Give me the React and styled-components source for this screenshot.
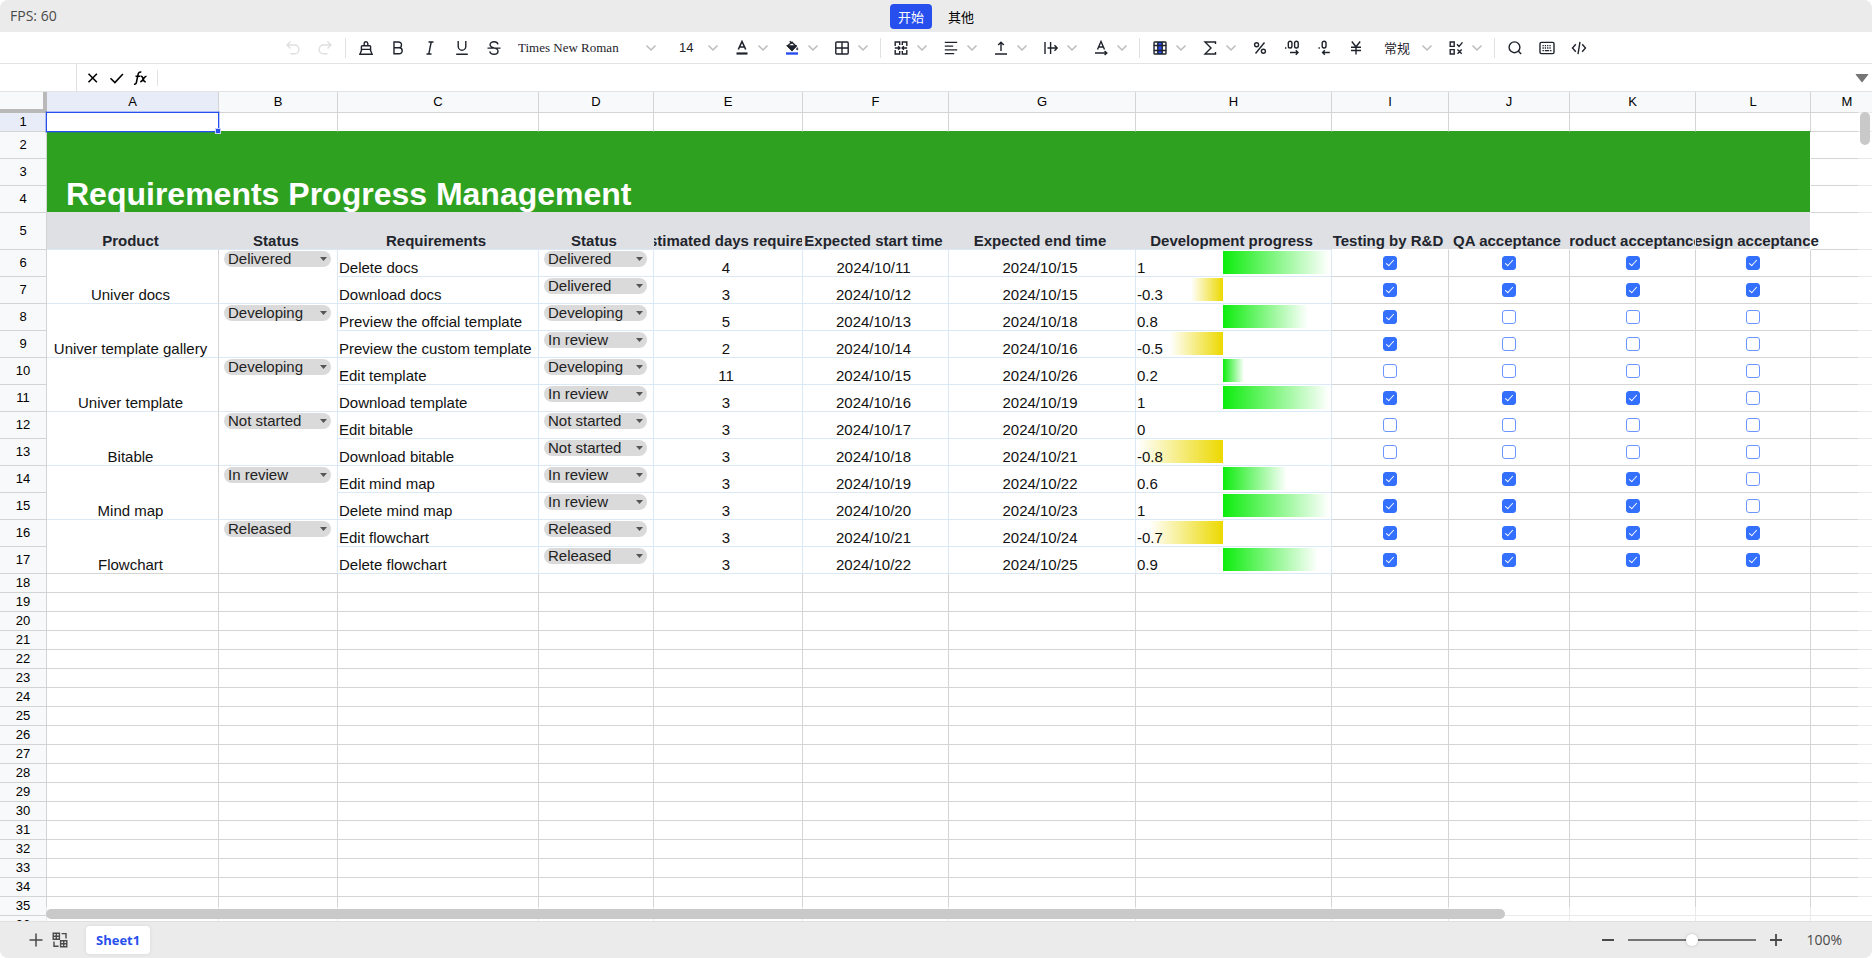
import React from "react";
import styled, { createGlobalStyle, css } from "styled-components";

const GRID = "#d4d4d4";
const SOFT = "#dbe9f6";
const GREEN = "#2fa121";
const BAND = "#dfe0e4";
const INK = "#1e222b";
const BLUE = "#274fee";

const UI_FONT = '"Open Sans", "Noto Sans CJK SC", sans-serif';
const CELL_FONT = '"Liberation Sans", Arial, "Noto Sans CJK SC", sans-serif';

const GlobalStyle = createGlobalStyle`
  *, *::before, *::after { box-sizing: border-box; }
  body { margin: 0; background: #fff; color: ${INK}; font-family: ${UI_FONT}; font-size: 13px; }
  button, select, input { font: inherit; color: inherit; margin: 0; }
`;

const Page = styled.div`
  display: flex;
  flex-direction: column;
  height: 100vh;
  overflow: hidden;
  border-radius: 8px;
`;

/* ---------- top bar ---------- */

const TopBar = styled.header`
  display: grid;
  grid-template-columns: 1fr auto 1fr;
  align-items: center;
  height: 32px;
  flex: none;
  padding: 0 10px;
  background: #ebebeb;
`;

const Fps = styled.span`
  color: #4a4a4a;
  font-size: 14px;
  line-height: 20px;
`;

const RibbonTabs = styled.nav`
  display: flex;
  gap: 8px;
  padding-top: 1px;
`;

const RibbonTab = styled.button`
  height: 25px;
  padding: 0 8px;
  border: 0;
  border-radius: 4px;
  font-family: "Noto Sans CJK SC", sans-serif;
  line-height: 24px;
  background: ${(p) => (p.$active ? BLUE : "transparent")};
  color: ${(p) => (p.$active ? "#fff" : "#000")};
`;

/* ---------- toolbar ---------- */

const Toolbar = styled.div`
  display: flex;
  align-items: center;
  justify-content: center;
  gap: 8px;
  height: 32px;
  flex: none;
  border-bottom: 1px solid #e2e3e6;
`;

const Divider = styled.span`
  width: 1px;
  height: 20px;
  background: #e0e1e4;
`;

const ToolButton = styled.button`
  display: flex;
  align-items: center;
  gap: 3px;
  width: ${(p) => (p.$menu ? 42 : 24)}px;
  height: 24px;
  padding: 0 0 0 4px;
  border: 0;
  background: none;
  color: ${(p) => (p.disabled ? "#dfdfe1" : INK)};
`;

const Picker = styled.label`
  display: flex;
  align-items: center;
  width: ${(p) => p.$width}px;
  height: 24px;
  padding-left: ${(p) => p.$pad}px;
`;

const PickerSelect = styled.select`
  appearance: none;
  flex: 1;
  min-width: 0;
  height: 24px;
  padding: 0;
  border: 0;
  background: none;
  font-family: ${(p) => p.$font};
  font-size: 13px;
`;

const Icon = styled.svg.attrs({ viewBox: "0 0 16 16", "aria-hidden": true })`
  width: 16px;
  height: 16px;
  flex: none;
  fill: none;
  stroke: currentColor;
  stroke-width: 1.4;
`;

const ChevronSvg = styled.svg`
  width: 19px;
  height: 16px;
  flex: none;
  fill: none;
  stroke: #bcbcbf;
  stroke-width: 1.5;
`;

const Chevron = () => (
  <ChevronSvg viewBox="0 0 19 16" aria-hidden="true">
    <path d="M5.5 5.5 10 10 14.500 5.5" />
  </ChevronSvg>
);

const ICONS = {
  undo: <path d="M5.5 1.5 2 5l3.5 3.5M2.2 5H9.5a4.4 4.4 0 0 1 0 8.8H5.5" />,
  redo: <path d="M10.5 1.5 14 5l-3.5 3.5M13.8 5H6.5a4.4 4.4 0 0 0 0 8.8h4" />,
  painter: (
    <path d="M6.200 5.700V3.600a1.800 1.800 0 0 1 3.600 0v2.100M3.400 9.400V6.600a.9.900 0 0 1 .9-.9h7.400a.9.900 0 0 1 .9.900v2.800M2.700 9.400h10.600M3.800 9.600 1.900 14.200h12.200L12.200 9.600" />
  ),
  bold: <path d="M4 2h4.6a2.9 2.9 0 0 1 0 5.8H4zM4 7.8h5.2a3 3 0 0 1 0 6H4z" />,
  italic: <path d="M6.5 2h5M4.5 14h5M9.2 2 6.8 14" />,
  underline: <path d="M4.2 1v5.4a3.8 3.8 0 0 0 7.6 0V1M2.2 14.2h11.6" />,
  strike: (
    <path d="M12 4.4C11.6 2.6 10 1.7 8 1.7c-2.200 0-3.900 1.100-3.900 3C4.100 6.500 5.600 7.300 8 7.900c2.600.6 4 1.500 4 3.300 0 1.900-1.700 3.100-4 3.100-2.200 0-3.900-1-4.200-2.900M1.500 8.1h13" />
  ),
  fontColor: (
    <>
      <path d="M4.3 9.500 8 1.500l3.700 8M5.500 7h5" strokeWidth="1.600" />
      <path d="M2.500 13.500h11" strokeWidth="2.2" />
    </>
  ),
  fill: (
    <>
      <path d="M4 5.500 8 2.200l4 4L8 10.200 3.700 6z" />
      <path d="M3.700 6h8.100L8 10.200z" fill="currentColor" />
      <path d="M5.800 1.200 8 3.400" />
      <path d="M13.200 7.500c.9 1.400.9 2.200 0 2.400-.9-.2-.9-1 0-2.400z" fill="currentColor" strokeWidth=".6" />
      <path d="M2 13.500h12" stroke={BLUE} strokeWidth="2.4" />
    </>
  ),
  borders: (
    <>
      <rect x="1.800" y="2" width="12.400" height="12" rx="1" />
      <path d="M8 2v12M1.800 8h12.400" />
    </>
  ),
  merge: (
    <path d="M6.700 5V2H2.200v4M2.200 10v4h4.500v-3M9.300 5V2h4.500v4M13.800 10v4H9.300v-3M1.800 8h5M5.200 6.300 6.900 8 5.200 9.700M14.200 8h-5M10.800 6.300 9.100 8l1.700 1.700" />
  ),
  alignLeft: <path d="M1.800 2.400h12.400M1.800 6.100h8.400M1.800 9.900h12.400M1.800 13.600h9.400" />,
  alignTop: <path d="M8 11V2.200M5.200 5 8 2.200 10.800 5M2 14h12" />,
  overflow: <path d="M2 2v12M7.600 2v12M4.500 8h9.500M11.500 5.200 14.200 8l-2.700 2.800" />,
  rotate: <path d="M4.500 9.500 8 1.500l3.500 8M5.700 7h4.600M2 13h12M11.600 11l2.200 2-2.200 2" />,
  table: (
    <>
      <rect x="5.800" y="2" width="4.400" height="12" fill={BLUE} stroke="none" />
      <rect x="2" y="2" width="12" height="12" rx=".8" />
      <path d="M5.800 2v12M10.200 2v12M2 5.500h12M2 10.500h12" />
    </>
  ),
  sum: <path d="M13.500 4V2H3l6 6-6 6h10.500v-2" />,
  percent: (
    <>
      <circle cx="4.600" cy="4.800" r="2" />
      <circle cx="11.400" cy="11.200" r="2" />
      <path d="M12.500 2.500 3.500 13.500" />
    </>
  ),
  addDecimal: (
    <>
      <rect x="4.300" y="1.200" width="3.600" height="6.800" rx="1.800" />
      <rect x="10.600" y="1.200" width="3.600" height="6.800" rx="1.800" />
      <path d="M1 8h1.400M6 12.500h8M11.800 10.300l2.200 2.200-2.200 2.200" />
    </>
  ),
  cutDecimal: (
    <>
      <rect x="6.200" y="1.200" width="3.800" height="6.800" rx="1.900" />
      <path d="M2.500 8h1.400M13.800 12.500H6.500M8.800 10.300l-2.200 2.200 2.200 2.200" />
    </>
  ),
  yen: <path d="M3.800 1.500 8 6.800l4.200-5.300M8 6.800v7.700M3 7.200h10M3 10.500h10" />,
  rules: (
    <path d="M2.200 2h4v4.400h-4zM2.200 9.600h4V14h-4zM9 4.200l2 2.200 3.500-4M9.500 9.600l4.200 4.200M13.700 9.600l-4.200 4.200" />
  ),
  search: (
    <>
      <circle cx="7.500" cy="7.300" r="5.400" />
      <path d="m11.400 11.200 2.800 2.900" />
    </>
  ),
  keyboard: (
    <>
      <rect x="1" y="2.400" width="14" height="11.200" rx="1.400" />
      <path d="M3.500 5.600h9M3.500 8h9" strokeDasharray="1.300 1" />
      <path d="M3.500 10.600h1.400M5.800 10.600h4.400M11.100 10.600h1.400" />
    </>
  ),
  code: <path d="M4.800 4.200 1.500 8l3.300 3.800M11.200 4.200 14.500 8l-3.300 3.800M9 1.800 7 14.200" />,
  close: <path d="m3.500 3.800 8.400 8.400M11.900 3.800 3.500 12.200" strokeWidth="1.600" />,
  confirm: <path d="m1.500 8.200 4.400 4.300 8-8.500" strokeWidth="1.600" />,
  fx: (
    <path
      d="M8.300 2.300c-1.700-.7-2.800.1-3.200 2L3.400 12.300c-.3 1.500-1.100 2.200-2.300 1.700M2.500 6.300h4.800M7.800 6.300c1.700-.2 1.900.7 2.400 2.800.5 2 .9 2.900 2.600 2.600M13.500 6.200c-1.500 0-2 .9-3.100 2.800-1.200 2-1.700 2.800-3.200 2.800"
      strokeWidth="1.600"
    />
  ),
  plus: <path d="M8 1.500v13M1.500 8h13" strokeWidth="1.500" />,
  minus: <path d="M2 8h12" strokeWidth="2" />,
  zoomIn: <path d="M8 2v12M2 8h12" strokeWidth="1.800" />,
  sheets: (
    <path d="M1.200 1.200h6.200v6H1.200zM4.300 1.200v6M1.200 4.200h6.200M8.600 8.800h6.200v6H8.600zM11.700 8.800v6M8.600 11.800h6.200M9.600 1.600h4.400v4.800M2 9.600v4.600h4.600" />
  ),
};

const Glyph = ({ name }) => <Icon>{ICONS[name]}</Icon>;

const Tool = ({ name, label, menu, disabled }) => (
  <ToolButton type="button" aria-label={label} $menu={menu} disabled={disabled}>
    <Glyph name={name} />
    {menu && <Chevron />}
  </ToolButton>
);

const DropPicker = ({ label, width, pad, font, options }) => (
  <Picker $width={width} $pad={pad}>
    <PickerSelect aria-label={label} $font={font} defaultValue={options[0]}>
      {options.map((o) => (
        <option key={o}>{o}</option>
      ))}
    </PickerSelect>
    <Chevron />
  </Picker>
);

/* ---------- formula bar ---------- */

const FormulaBar = styled.div`
  display: flex;
  align-items: center;
  height: 28px;
  flex: none;
  border-bottom: 1px solid #e2e3e6;
  color: #000;
`;

const NameBox = styled.input`
  width: 77px;
  height: 27px;
  border: 0;
  border-right: 1px solid #e0e1e4;
  outline: 0;
  text-align: center;
`;

const FormulaActions = styled.div`
  display: flex;
  gap: 8px;
  height: 16px;
  padding: 0 8px;
  border-right: 1px solid #e0e1e4;
`;

const PlainButton = styled.button`
  display: flex;
  padding: 0;
  border: 0;
  background: none;
  color: inherit;
`;

const FormulaInput = styled.input`
  flex: 1;
  border: 0;
  outline: 0;
  padding: 0 8px;
`;

const ExpandButton = styled(PlainButton)`
  padding-right: 3px;
  color: #757575;
`;

/* ---------- sheet ---------- */

const SheetArea = styled.main`
  position: relative;
  flex: 1;
  min-height: 0;
  overflow: hidden;
  font-family: ${CELL_FONT};
`;

const Grid = styled.table`
  width: 100%;
  min-width: 1884px;
  table-layout: fixed;
  border-collapse: separate;
  border-spacing: 0;
`;

const Row = styled.tr`
  height: ${(p) => p.$height}px;
`;

const headCell = css`
  padding: 0;
  border-right: 1px solid ${GRID};
  border-bottom: 1px solid ${GRID};
  background: ${(p) => (p.$selected ? "#e8ebf8" : "#f8f9fb")};
  color: #000;
  font-size: 13px;
  font-weight: 400;
  line-height: 16px;
  text-align: center;
  vertical-align: middle;
`;

const ColHead = styled.th`
  ${headCell}
`;

const RowHead = styled.th`
  ${headCell}
`;

const Corner = styled.td`
  padding: 0;
  background: #f8f9fb;
  border-right: 4px solid #b9b9b9;
  border-bottom: 4px solid #b9b9b9;
`;

const Cell = styled.td`
  position: relative;
  padding: 0;
  border-right: 1px solid ${(p) => p.$right || GRID};
  border-bottom: 1px solid ${(p) => p.$bottom || GRID};
  background: ${(p) => p.$fill || "transparent"};
  vertical-align: ${(p) => p.$valign || "bottom"};
`;

const CellText = styled.div`
  position: relative;
  display: flex;
  justify-content: ${(p) => (p.$left ? "flex-start" : "center")};
  padding-left: ${(p) => (p.$left ? 1 : 0)}px;
  clip-path: ${(p) => (p.$spill ? "inset(0 -24px 0 0)" : "inset(0)")};
  color: ${(p) => (p.$bold ? "#22252d" : "#111")};
  font-size: 15px;
  font-weight: ${(p) => (p.$bold ? 700 : 400)};
  line-height: 17px;
  white-space: nowrap;

  span {
    flex: none;
    margin-right: ${(p) => (p.$left ? 0 : 4)}px;
  }
`;

const Title = styled.h1`
  margin: 0;
  padding-left: 19px;
  color: #fff;
  font-size: 32px;
  font-weight: 700;
  line-height: 36px;
`;

const Selection = styled.div`
  position: absolute;
  z-index: 1;
  inset: -1px;
  border: 1px solid ${BLUE};
  box-shadow: 0 0 0 1px rgba(39, 79, 238, 0.3);

  &::after {
    content: "";
    position: absolute;
    right: -3px;
    bottom: -3px;
    width: 6px;
    height: 6px;
    border: 1px solid #c9d3fb;
    background: ${BLUE};
  }
`;

const Chip = styled.label`
  display: flex;
  align-items: center;
  height: 16px;
  margin: 1px 6px 0 5px;
  padding: 0 4px;
  border-radius: 8px;
  background: #dadada;
`;

const ChipSelect = styled.select`
  appearance: none;
  flex: 1;
  min-width: 0;
  height: 16px;
  padding: 0;
  border: 0;
  background: none;
  color: #222;
  font-size: 15px;
  line-height: 16px;
`;

const ChipCaret = styled.svg`
  width: 7px;
  height: 4px;
  flex: none;
  fill: #555;
`;

const BarTrack = styled.div`
  position: absolute;
  inset: 1px 2px 2px;
`;

const Bar = styled.div`
  position: absolute;
  top: 0;
  bottom: 0;
  background: ${(p) =>
    p.$negative
      ? "linear-gradient(to left, #ecd900, #fff)"
      : "linear-gradient(to right, #0ced0c, #fff)"};
`;

const Tick = styled.input`
  appearance: none;
  display: block;
  width: 14px;
  height: 14px;
  margin: 0 auto;
  border: 1px solid #6b96ff;
  border-radius: 3px;
  background: #fff;

  &:checked {
    border-color: #3370ff;
    background: #3370ff;
  }

  &:checked::after {
    content: "";
    display: block;
    width: 4px;
    height: 8px;
    margin: 1px 0 0 4px;
    border: solid #fff;
    border-width: 0 1px 1px 0;
    transform: rotate(42deg);
  }
`;

const VerticalScroll = styled.div`
  position: absolute;
  z-index: 2;
  top: 20px;
  right: 0;
  bottom: 0;
  width: 14px;
  padding: 0 2px;
  background: rgba(255, 255, 255, 0.5);
`;

const HorizontalScroll = styled.div`
  position: absolute;
  z-index: 2;
  left: 46px;
  right: 14px;
  bottom: 0;
  height: 14px;
  padding: 2px 0;
  background: rgba(255, 255, 255, 0.5);
`;

const Thumb = styled.div`
  width: ${(p) => p.$width};
  height: ${(p) => p.$height};
  border-radius: 5px;
  background: #c9c9c9;
`;

/* ---------- footer ---------- */

const Footer = styled.footer`
  display: flex;
  align-items: center;
  height: 37px;
  flex: none;
  padding: 0 30px 0 28px;
  border-top: 1px solid #dedfe1;
  background: #ebebeb;
  color: #4a4a4a;
`;

const SheetTools = styled.div`
  display: flex;
  gap: 8px;
  flex: 1;
  align-items: center;
`;

const SheetTab = styled.button`
  height: 28px;
  margin-left: 10px;
  padding: 0 10px;
  border: 0;
  border-radius: 4px;
  background: #fff;
  box-shadow: 0 0 4px rgba(0, 0, 0, 0.08);
  color: ${BLUE};
  font-weight: 700;
`;

const ZoomTools = styled.div`
  display: flex;
  align-items: center;
  gap: 12px;
`;

const ZoomSlider = styled.input`
  appearance: none;
  width: 128px;
  height: 12px;
  background: linear-gradient(#757575, #757575) center / 100% 2px no-repeat;

  &::-webkit-slider-thumb {
    appearance: none;
    width: 12px;
    height: 12px;
    border-radius: 50%;
    background: #fff;
    box-shadow: 0 0 3px rgba(0, 0, 0, 0.2);
  }
`;

const ZoomValue = styled.output`
  margin-left: 10px;
  font-size: 14px;
  line-height: 20px;
`;

/* ---------- data ---------- */

const COLUMNS = [
  ["A", 172], ["B", 119], ["C", 201], ["D", 115], ["E", 149], ["F", 146], ["G", 187],
  ["H", 196], ["I", 117], ["J", 121], ["K", 126], ["L", 115], ["M", null],
];

const HEADINGS = [
  "Product", "Status", "Requirements", "Status", "Estimated days required",
  "Expected start time", "Expected end time", "Development progress",
  "Testing by R&D", "QA acceptance", "Product acceptance", "Design acceptance",
];

const STATUSES = ["Not started", "Developing", "In review", "Delivered", "Released"];

const GROUPS = [
  { product: "Univer docs", status: "Delivered", items: [
    ["Delete docs", "Delivered", 4, "2024/10/11", "2024/10/15", 1, [1, 1, 1, 1]],
    ["Download docs", "Delivered", 3, "2024/10/12", "2024/10/15", -0.3, [1, 1, 1, 1]],
  ] },
  { product: "Univer template gallery", status: "Developing", items: [
    ["Preview the offcial template", "Developing", 5, "2024/10/13", "2024/10/18", 0.8, [1, 0, 0, 0]],
    ["Preview the custom template", "In review", 2, "2024/10/14", "2024/10/16", -0.5, [1, 0, 0, 0]],
  ] },
  { product: "Univer template", status: "Developing", items: [
    ["Edit template", "Developing", 11, "2024/10/15", "2024/10/26", 0.2, [0, 0, 0, 0]],
    ["Download template", "In review", 3, "2024/10/16", "2024/10/19", 1, [1, 1, 1, 0]],
  ] },
  { product: "Bitable", status: "Not started", items: [
    ["Edit bitable", "Not started", 3, "2024/10/17", "2024/10/20", 0, [0, 0, 0, 0]],
    ["Download bitable", "Not started", 3, "2024/10/18", "2024/10/21", -0.8, [0, 0, 0, 0]],
  ] },
  { product: "Mind map", status: "In review", items: [
    ["Edit mind map", "In review", 3, "2024/10/19", "2024/10/22", 0.6, [1, 1, 1, 0]],
    ["Delete mind map", "In review", 3, "2024/10/20", "2024/10/23", 1, [1, 1, 1, 0]],
  ] },
  { product: "Flowchart", status: "Released", items: [
    ["Edit flowchart", "Released", 3, "2024/10/21", "2024/10/24", -0.7, [1, 1, 1, 1]],
    ["Delete flowchart", "Released", 3, "2024/10/22", "2024/10/25", 0.9, [1, 1, 1, 1]],
  ] },
];

const FIRST_ITEM_ROW = 6;
const BAR_MIN = -0.8;
const BAR_SPAN = 1.8;

const barStyle = (value) => ({
  left: `${((Math.min(value, 0) - BAR_MIN) / BAR_SPAN) * 100}%`,
  width: `${(Math.abs(value) / BAR_SPAN) * 100}%`,
});

const StatusChip = ({ value, label }) => (
  <Chip>
    <ChipSelect aria-label={label} defaultValue={value}>
      {STATUSES.map((s) => (
        <option key={s}>{s}</option>
      ))}
    </ChipSelect>
    <ChipCaret viewBox="0 0 7 4" aria-hidden="true">
      <path d="M0 0h7L3.500 4z" />
    </ChipCaret>
  </Chip>
);

const ItemRow = ({ group, index, number }) => {
  const [name, status, days, start, end, progress, checks] = group.items[index];
  const mergedBottom = group.product === "Flowchart" ? GRID : SOFT;
  return (
    <Row $height={27}>
      <RowHead scope="row">{number}</RowHead>
      {index === 0 && (
        <>
          <Cell rowSpan={2} $bottom={mergedBottom}>
            <CellText><span>{group.product}</span></CellText>
          </Cell>
          <Cell rowSpan={2} $right={SOFT} $bottom={mergedBottom} $valign="top">
            <StatusChip value={group.status} label={`${group.product} status`} />
          </Cell>
        </>
      )}
      <Cell $right={SOFT} $bottom={SOFT}>
        <CellText $left><span>{name}</span></CellText>
      </Cell>
      <Cell $right={SOFT} $bottom={SOFT} $valign="top">
        <StatusChip value={status} label={`${name} status`} />
      </Cell>
      {[days, start, end].map((value, i) => (
        <Cell key={i} $right={SOFT} $bottom={SOFT}>
          <CellText><span>{value}</span></CellText>
        </Cell>
      ))}
      <Cell $right={SOFT} $bottom={SOFT}>
        <BarTrack>
          <Bar $negative={progress < 0} style={barStyle(progress)} />
        </BarTrack>
        <CellText $left><span>{progress}</span></CellText>
      </Cell>
      {checks.map((checked, i) => (
        <Cell key={i} $valign="middle">
          <Tick type="checkbox" defaultChecked={!!checked} aria-label={`${name}: ${HEADINGS[8 + i]}`} />
        </Cell>
      ))}
      <Cell />
    </Row>
  );
};

const EmptyRow = ({ number }) => (
  <Row $height={19}>
    <RowHead scope="row">{number}</RowHead>
    {COLUMNS.map(([name]) => (
      <Cell key={name} />
    ))}
  </Row>
);

const Sheet = () => (
  <SheetArea>
    <Grid>
      <colgroup>
        <col width="47" />
        {COLUMNS.map(([name, width]) => (
          <col key={name} width={width || undefined} />
        ))}
      </colgroup>
      <thead>
        <Row $height={21}>
          <Corner />
          {COLUMNS.map(([name]) => (
            <ColHead key={name} scope="col" $selected={name === "A"}>{name}</ColHead>
          ))}
        </Row>
      </thead>
      <tbody>
        <Row $height={19}>
          <RowHead scope="row" $selected>1</RowHead>
          {COLUMNS.map(([name]) => (
            <Cell key={name} $bottom={name === "M" ? GRID : GREEN}>
              {name === "A" && <Selection />}
            </Cell>
          ))}
        </Row>
        <Row $height={27}>
          <RowHead scope="row">2</RowHead>
          <Cell colSpan={12} rowSpan={3} $fill={GREEN} $right="#fff" $bottom={BAND}>
            <Title>Requirements Progress Management</Title>
          </Cell>
          <Cell />
        </Row>
        {[3, 4].map((n) => (
          <Row key={n} $height={27}>
            <RowHead scope="row">{n}</RowHead>
            <Cell />
          </Row>
        ))}
        <Row $height={37}>
          <RowHead scope="row">5</RowHead>
          {HEADINGS.map((text, i) => (
            <Cell key={i} $fill={BAND} $right={i === 11 ? "#fff" : BAND} $bottom={i < 8 ? SOFT : "#fff"}>
              <CellText $bold $spill={i === 11}><span>{text}</span></CellText>
            </Cell>
          ))}
          <Cell />
        </Row>
        {GROUPS.map((group, g) =>
          group.items.map((item, i) => (
            <ItemRow key={item[0]} group={group} index={i} number={FIRST_ITEM_ROW + g * 2 + i} />
          ))
        )}
        {Array.from({ length: 19 }, (_, i) => (
          <EmptyRow key={i} number={18 + i} />
        ))}
      </tbody>
    </Grid>
    <VerticalScroll>
      <Thumb $width="10px" $height="33px" />
    </VerticalScroll>
    <HorizontalScroll>
      <Thumb $width="80.5%" $height="10px" />
    </HorizontalScroll>
  </SheetArea>
);

export default function App() {
  return (
    <Page>
      <GlobalStyle />
      <TopBar>
        <Fps>FPS: 60</Fps>
        <RibbonTabs>
          <RibbonTab type="button" $active>开始</RibbonTab>
          <RibbonTab type="button">其他</RibbonTab>
        </RibbonTabs>
      </TopBar>

      <Toolbar role="toolbar">
        <Tool name="undo" label="撤销" disabled />
        <Tool name="redo" label="重做" disabled />
        <Divider />
        <Tool name="painter" label="格式刷" />
        <Tool name="bold" label="粗体" />
        <Tool name="italic" label="斜体" />
        <Tool name="underline" label="下划线" />
        <Tool name="strike" label="删除线" />
        <DropPicker
          label="字体"
          width={146}
          pad={4}
          font={'"Liberation Serif", "Times New Roman", serif'}
          options={["Times New Roman", "Arial"]}
        />
        <DropPicker label="字号" width={54} pad={11} font={CELL_FONT} options={["14", "16", "18"]} />
        <Tool name="fontColor" label="文字颜色" menu />
        <Tool name="fill" label="单元格颜色" menu />
        <Tool name="borders" label="边框" menu />
        <Divider />
        <Tool name="merge" label="合并单元格" menu />
        <Tool name="alignLeft" label="水平对齐" menu />
        <Tool name="alignTop" label="垂直对齐" menu />
        <Tool name="overflow" label="文本换行" menu />
        <Tool name="rotate" label="文本旋转" menu />
        <Divider />
        <Tool name="table" label="行列" menu />
        <Tool name="sum" label="函数" menu />
        <Tool name="percent" label="百分比" />
        <Tool name="addDecimal" label="增加小数位" />
        <Tool name="cutDecimal" label="减少小数位" />
        <Tool name="yen" label="货币" />
        <DropPicker
          label="数字格式"
          width={60}
          pad={8}
          font={'"Noto Sans CJK SC", sans-serif'}
          options={["常规", "文本"]}
        />
        <Tool name="rules" label="数据验证" menu />
        <Divider />
        <Tool name="search" label="查找" />
        <Tool name="keyboard" label="快捷键" />
        <Tool name="code" label="脚本" />
      </Toolbar>

      <FormulaBar>
        <NameBox aria-label="名称框" />
        <FormulaActions>
          <PlainButton type="button" aria-label="取消"><Glyph name="close" /></PlainButton>
          <PlainButton type="button" aria-label="确认"><Glyph name="confirm" /></PlainButton>
          <PlainButton type="button" aria-label="插入函数"><Glyph name="fx" /></PlainButton>
        </FormulaActions>
        <FormulaInput aria-label="编辑栏" />
        <ExpandButton type="button" aria-label="展开">
          <svg width="14" height="10" viewBox="0 0 14 10" fill="currentColor" aria-hidden="true">
            <path d="M1.200 1h11.600a.5.5 0 0 1 .4.800L7.500 8.900a.7.700 0 0 1-1 0L.8 1.800A.5.500 0 0 1 1.200 1z" />
          </svg>
        </ExpandButton>
      </FormulaBar>

      <Sheet />

      <Footer>
        <SheetTools>
          <PlainButton type="button" aria-label="新建工作表"><Glyph name="plus" /></PlainButton>
          <PlainButton type="button" aria-label="全部工作表"><Glyph name="sheets" /></PlainButton>
          <SheetTab type="button">Sheet1</SheetTab>
        </SheetTools>
        <ZoomTools>
          <PlainButton type="button" aria-label="缩小"><Glyph name="minus" /></PlainButton>
          <ZoomSlider type="range" min="0" max="200" defaultValue="100" aria-label="缩放" />
          <PlainButton type="button" aria-label="放大"><Glyph name="zoomIn" /></PlainButton>
          <ZoomValue>100%</ZoomValue>
        </ZoomTools>
      </Footer>
    </Page>
  );
}
